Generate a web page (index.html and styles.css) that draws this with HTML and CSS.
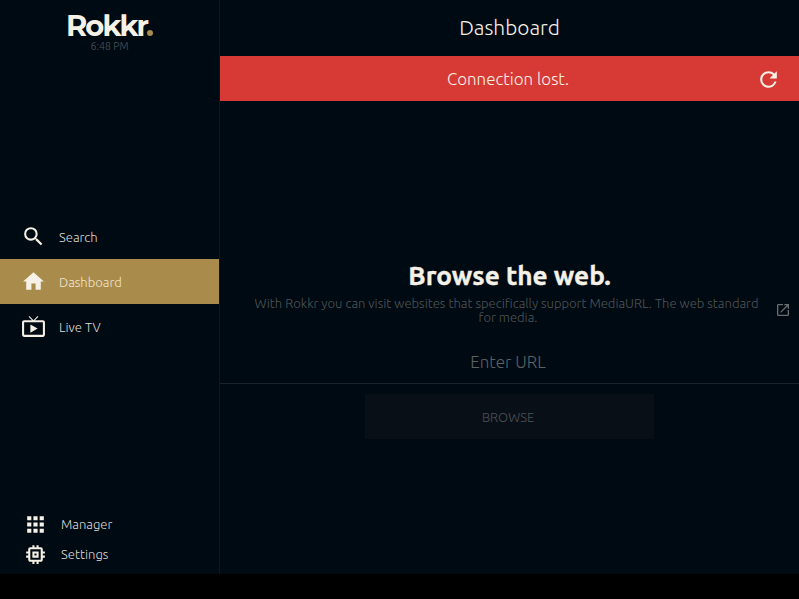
FILE: index.html
```html
<!DOCTYPE html>
<html lang="en">
<head>
<meta charset="utf-8">
<title>Rokkr</title>
<link rel="stylesheet" href="styles.css">
</head>
<body>
<div class="app">
  <aside class="sidebar">
    <header class="brand">
      <div class="logo">Rokkr<span class="dot"></span></div>
      <time class="clock">6:48 PM</time>
    </header>
    <nav class="menu">
      <a class="item"><svg class="icon" viewBox="0 0 24 24"><path d="M15.5 14h-.79l-.28-.27A6.47 6.47 0 0 0 16 9.5 6.5 6.5 0 1 0 9.5 16c1.61 0 3.09-.59 4.23-1.57l.27.28v.79l5 4.99L20.49 19l-4.99-5zm-6 0C7.01 14 5 11.99 5 9.5S7.01 5 9.5 5 14 7.01 14 9.5 11.99 14 9.5 14z"/></svg><span>Search</span></a>
      <a class="item active"><svg class="icon" viewBox="0 0 24 24"><path d="M10 20v-6h4v6h5v-8h3L12 3 2 12h3v8z"/></svg><span>Dashboard</span></a>
      <a class="item"><svg class="icon" viewBox="0 0 24 24"><path d="M21 6h-7.59l3.29-3.29L16 2l-4 4-4-4-.7.71L10.59 6H3c-1.1 0-2 .89-2 2v12c0 1.1.9 2 2 2h18c1.1 0 2-.9 2-2V8c0-1.11-.9-2-2-2zm0 14H3V8h18v12zM9 10v8l7-4z"/></svg><span>Live TV</span></a>
    </nav>
    <nav class="tools">
      <a class="tool"><svg class="icon" viewBox="0 0 24 24"><path d="M4 8h4V4H4v4zm6 12h4v-4h-4v4zm-6 0h4v-4H4v4zm0-6h4v-4H4v4zm6 0h4v-4h-4v4zm6-10v4h4V4h-4zm-6 4h4V4h-4v4zm6 6h4v-4h-4v4zm0 6h4v-4h-4v4z"/></svg><span>Manager</span></a>
      <a class="tool"><svg class="icon" viewBox="0 0 24 24"><path d="M15 9H9v6h6V9zm-2 4h-2v-2h2v2zm8-2V9h-2V7c0-1.100-.9-2-2-2h-2V3h-2v2h-2V3H9v2H7c-1.100 0-2 .9-2 2v2H3v2h2v2H3v2h2v2c0 1.100.9 2 2 2h2v2h2v-2h2v2h2v-2h2c1.100 0 2-.9 2-2v-2h2v-2h-2v-2h2zm-4 6H7V7h10v10z"/></svg><span>Settings</span></a>
    </nav>
  </aside>
  <main class="main">
    <h1 class="title">Dashboard</h1>
    <div class="alert"><span class="alert-text">Connection lost.</span><svg class="icon" viewBox="0 0 24 24"><path d="M17.650 6.350A7.960 7.960 0 0 0 12 4a8 8 0 1 0 7.730 10h-2.080A5.990 5.990 0 0 1 12 18a6 6 0 1 1 0-12c1.660 0 3.140.69 4.220 1.780L13 11h7V4l-2.350 2.350z"/></svg></div>
    <section class="browse">
      <h2 class="heading">Browse the web.</h2>
      <div class="about">
        <p class="copy">With Rokkr you can visit websites that specifically support MediaURL. The web standard<br><span class="tail">for media.</span></p>
        <svg class="open" viewBox="0 0 24 24"><path d="M19 19H5V5h7V3H5a2 2 0 0 0-2 2v14a2 2 0 0 0 2 2h14c1.100 0 2-.9 2-2v-7h-2v7zM14 3v2h3.590l-9.830 9.830 1.410 1.410L19 6.410V10h2V3h-7z"/></svg>
      </div>
      <div class="field">Enter URL</div>
      <button class="button">BROWSE</button>
    </section>
  </main>
</div>
</body>
</html>
```
FILE: styles.css
```css
* { box-sizing: border-box; }
body { margin: 0; background: #000; font-family: Ubuntu, "Noto Sans", sans-serif; font-weight: 300; color: #f5f1e6; }
.app { display: flex; width: 799px; height: 574px; background: #000a12; }
.sidebar { width: 220px; border-right: 1px solid #0d161d; display: flex; flex-direction: column; }
.brand { height: 214px; padding-top: 14px; display: flex; flex-direction: column; align-items: center; }
.logo { display: flex; align-items: baseline; height: 25px; font: 700 29px/24px Montserrat, Inter, sans-serif; letter-spacing: -1.9px; }
.dot { width: 6px; height: 6px; margin-left: 0; border-radius: 50%; background: #a98b4b; }
.clock { font-size: 10.5px; line-height: 14px; color: #50565a; }
.item { display: flex; align-items: center; height: 45px; padding-left: 21px; font-size: 13.05px; color: #dedbd2; }
.item .icon { margin-right: 13px; }
.active { background: #a98b4b; color: #f0e5cf; }
.icon { width: 25px; height: 25px; fill: #f5f1e6; flex: none; }
.tools { margin-top: auto; padding-bottom: 5px; }
.tool { display: flex; align-items: center; height: 30px; padding-left: 23px; font-size: 13.05px; color: #dedbd2; }
.tool .icon { margin-right: 13px; }
.main { width: 579px; }
.title { margin: 0; height: 56px; text-align: center; font-size: 20.9px; line-height: 55px; font-weight: 300; }
.alert { height: 45px; display: flex; align-items: center; background: #d73a35; padding: 1px 18px 0 40px; font-size: 16.95px; }
.alert-text { flex: 1; text-align: center; line-height: 20px; margin-top: -1px; }
.browse { padding-top: 159px; display: flex; flex-direction: column; align-items: center; }
.heading { margin: 0; height: 34px; font-size: 26.2px; line-height: 32px; font-weight: 700; -webkit-text-stroke: 0.4px #f5f1e6; }
.about { display: flex; align-items: center; width: 100%; height: 32px; padding: 0 8px 0 34px; }
.copy { margin: 0; flex: 1; text-align: center; white-space: nowrap; font-size: 13.05px; line-height: 14px; color: #4f5557; }
.tail { padding-left: 3px; }
.open { width: 16px; height: 16px; margin-left: 16px; fill: #696d6d; }
.field { width: 100%; height: 57px; margin-top: 1px; padding-right: 3px; border-bottom: 1px solid #1b242a; text-align: center; font-size: 17px; line-height: 70px; color: #5b6264; }
.button { width: 289px; height: 45px; margin: 10px 1px 0 0; padding: 0 2px 0 0; border: 0; background: #090f17; color: #4d5158; font: inherit; font-size: 13.05px; }
```
